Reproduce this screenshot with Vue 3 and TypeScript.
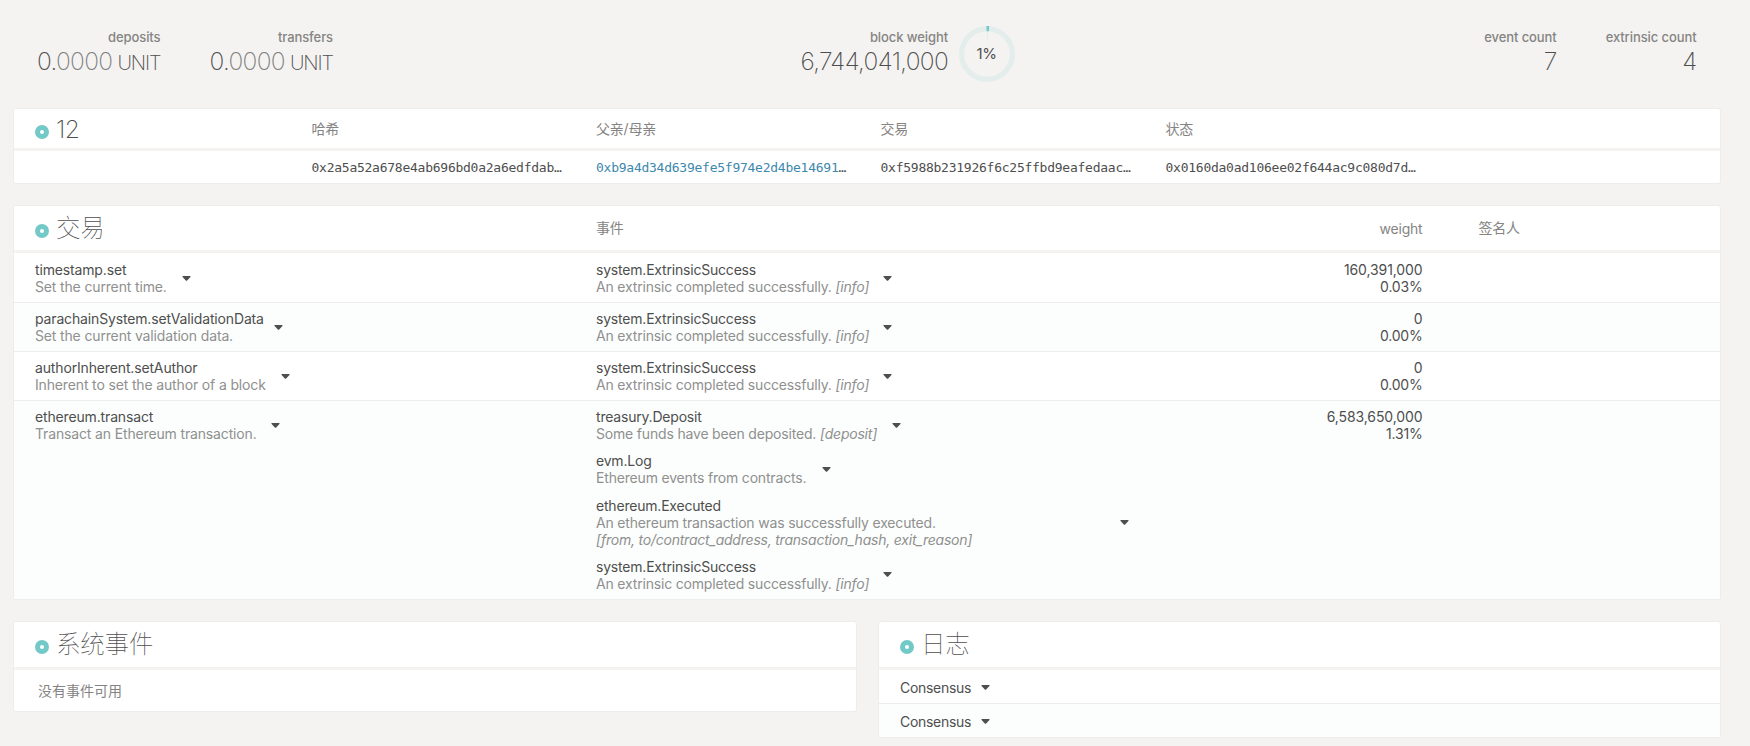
<script setup lang="ts">
interface Entry {
  name: string
  lines: { text: string; args?: string }[]
  width: number
}

interface Extrinsic {
  call: Entry
  events: Entry[]
  weight: string
  percent: string
}

const success: Entry = {
  name: 'system.ExtrinsicSuccess',
  lines: [{ text: 'An extrinsic completed successfully.', args: '[info]' }],
  width: 287,
}

const hashes = [
  { label: '哈希', value: '0x2a5a52a678e4ab696bd0a2a6edfdab' },
  { label: '父亲/母亲', value: '0xb9a4d34d639efe5f974e2d4be14691', link: true },
  { label: '交易', value: '0xf5988b231926f6c25ffbd9eafedaac' },
  { label: '状态', value: '0x0160da0ad106ee02f644ac9c080d7d' },
]

const extrinsics: Extrinsic[] = [
  {
    call: { name: 'timestamp.set', lines: [{ text: 'Set the current time.' }], width: 147 },
    events: [success],
    weight: '160,391,000',
    percent: '0.03%',
  },
  {
    call: { name: 'parachainSystem.setValidationData', lines: [{ text: 'Set the current validation data.' }], width: 239 },
    events: [success],
    weight: '0',
    percent: '0.00%',
  },
  {
    call: { name: 'authorInherent.setAuthor', lines: [{ text: 'Inherent to set the author of a block' }], width: 245.5 },
    events: [success],
    weight: '0',
    percent: '0.00%',
  },
  {
    call: { name: 'ethereum.transact', lines: [{ text: 'Transact an Ethereum transaction.' }], width: 236 },
    events: [
      { name: 'treasury.Deposit', lines: [{ text: 'Some funds have been deposited.', args: '[deposit]' }], width: 296 },
      { name: 'evm.Log', lines: [{ text: 'Ethereum events from contracts.' }], width: 226 },
      {
        name: 'ethereum.Executed',
        lines: [
          { text: 'An ethereum transaction was successfully executed.' },
          { text: '', args: '[from, to/contract_address, transaction_hash, exit_reason]' },
        ],
        width: 524,
      },
      success,
    ],
    weight: '6,583,650,000',
    percent: '1.31%',
  },
]

const logs = ['Consensus', 'Consensus']
</script>

<template>
  <main class="page">
    <header class="summary">
      <section class="group">
        <div v-for="label in ['deposits', 'transfers']" :key="label" class="stat balance">
          <span class="label">{{ label }}</span>
          <span class="value">0.<span class="decimals">0000</span><span class="unit">UNIT</span></span>
        </div>
      </section>
      <section class="group middle">
        <div class="stat">
          <span class="label">block weight</span>
          <span class="value">6,744,041,000</span>
        </div>
        <div class="gauge">
          <svg width="56" height="56" viewBox="0 0 56 56">
            <circle cx="28" cy="28" r="25.4" fill="none" stroke="#e3eeec" stroke-width="5.2" />
            <path d="M28 5.2L29.4 5.2L28.2 24Z" fill="#e3eeec" />
            <path d="M27.4 0H30.3L29.8 5.2H27.6Z" fill="#73c9c8" />
          </svg>
          <span>1%</span>
        </div>
      </section>
      <section class="group end">
        <div class="stat">
          <span class="label">event count</span>
          <span class="value">7</span>
        </div>
        <div class="stat">
          <span class="label">extrinsic count</span>
          <span class="value">4</span>
        </div>
      </section>
    </header>

    <section class="card block">
      <div class="head">
        <h1><i class="dot"></i>12</h1>
        <span v-for="h in hashes" :key="h.label">{{ h.label }}</span>
      </div>
      <div class="row">
        <span></span>
        <span v-for="h in hashes" :key="h.label" class="hash"><a v-if="h.link">{{ h.value }}</a><template v-else>{{ h.value }}</template>…</span>
      </div>
    </section>

    <section class="card extrinsics">
      <div class="head">
        <h1><i class="dot"></i>交易</h1>
        <span class="cjk">事件</span>
        <span class="num">weight</span>
        <span class="cjk signer">签名人</span>
      </div>
      <div v-for="ex in extrinsics" :key="ex.call.name" class="row">
        <div v-for="(column, c) in [[ex.call], ex.events]" :key="c" class="entries">
          <div v-for="entry in column" :key="entry.name" class="entry">
            <div class="text" :style="{ width: entry.width + 'px' }">
              <div class="name">{{ entry.name }}</div>
              <div v-for="(line, i) in entry.lines" :key="i" class="doc">{{ line.text }} <em v-if="line.args">{{ line.args }}</em></div>
            </div>
            <svg class="caret" width="9" height="5" viewBox="0 0 9 5"><path d="M.9 0H8.1Q9 .2 8.4 .9L5.2 4.5Q4.5 5.2 3.8 4.5L.6 .9Q0 .2 .9 0Z" /></svg>
          </div>
        </div>
        <div class="num">
          <div class="weight">{{ ex.weight }}</div>
          <div>{{ ex.percent }}</div>
        </div>
      </div>
    </section>

    <div class="columns">
      <section class="card">
        <div class="head">
          <h1><i class="dot"></i>系统事件</h1>
        </div>
        <div class="row empty">没有事件可用</div>
      </section>
      <section class="card">
        <div class="head">
          <h1><i class="dot"></i>日志</h1>
        </div>
        <div v-for="(log, i) in logs" :key="i" class="row log">
          <span>{{ log }}</span>
          <svg class="caret" width="9" height="5" viewBox="0 0 9 5"><path d="M.9 0H8.1Q9 .2 8.4 .9L5.2 4.5Q4.5 5.2 3.8 4.5L.6 .9Q0 .2 .9 0Z" /></svg>
        </div>
      </section>
    </div>
  </main>
</template>

<style>
html,
body {
  background: #f4f3f1;
}
</style>

<style scoped>
.page {
  box-sizing: border-box;
  width: 1750px;
  height: 746px;
  padding: 0 29px 0 13px;
  overflow: hidden;
  background: #f4f3f1;
  color: #4e4e4e;
  font: 14px/17px Inter, 'Noto Sans CJK SC', sans-serif;
  letter-spacing: -0.2px;
}

.summary {
  display: grid;
  grid-template-columns: 401px 1fr 400px;
  height: 108px;
}

.group {
  display: flex;
  align-items: flex-start;
  padding-top: 29px;
}

.stat {
  display: flex;
  flex-direction: column;
  align-items: flex-end;
}

.balance {
  width: 147.5px;
}

.balance + .balance {
  width: 172.5px;
}

.middle {
  padding-left: 387px;
}

.middle .stat {
  width: 147px;
}

.end {
  justify-content: flex-end;
  gap: 49px;
  padding-right: 24.5px;
}

.label {
  color: #858483;
  font-size: 13px;
  font-weight: 450;
  letter-spacing: -0.09px;
}

.value {
  height: 30px;
  font-size: 24.5px;
  font-weight: 200;
  line-height: 30px;
  letter-spacing: -0.7px;
  white-space: nowrap;
}

.decimals {
  opacity: 0.7;
}

.unit {
  margin-left: 5px;
  font-size: 20px;
  letter-spacing: -1.1px;
}

.gauge {
  display: grid;
  place-items: center;
  margin: -3.5px 0 0 10.5px;
}

.gauge > * {
  grid-area: 1 / 1;
}

.gauge span {
  font-size: 15px;
  letter-spacing: -0.4px;
}

.card {
  border: 1px solid #eeedeb;
  border-radius: 3px;
  background: #fff;
  margin-bottom: 21px;
}

.head {
  display: grid;
  align-items: center;
  box-sizing: border-box;
  height: 48px;
  padding-left: 21px;
  border-bottom: 3px solid #f4f3f2;
  color: #858483;
}

.head h1 {
  display: flex;
  align-items: center;
  margin: 0;
  color: #4e4e4e;
  font-size: 24.5px;
  font-weight: 100;
  line-height: 30px;
  letter-spacing: -0.2px;
}

.dot {
  box-sizing: border-box;
  width: 14px;
  height: 14px;
  margin: 5px 7px 0 0;
  border: 5px solid #73c9c8;
  border-radius: 50%;
}

.block .head,
.block .row {
  grid-template-columns: 276.5px 284.5px 284.5px 285px 1fr;
}

.block .head {
  height: 42px;
}

.block .head h1 {
  font-weight: 170;
  letter-spacing: -0.5px;
}

.block .dot {
  margin-top: 7px;
}

.block .row {
  display: grid;
  align-items: center;
  height: 32px;
  padding-left: 21px;
}

.hash {
  font: 13px/17px 'DejaVu Sans Mono', monospace;
  letter-spacing: -0.25px;
}

.hash a {
  color: #3e88ad;
}

.extrinsics .head,
.extrinsics .row {
  grid-template-columns: 561px 626.5px 200px 1fr;
}

.extrinsics .head {
  height: 47px;
}

.cjk {
  margin-top: -2px;
}

.num {
  text-align: right;
}

.weight {
  letter-spacing: -0.1px;
}

.signer {
  padding-left: 56px;
}

.extrinsics .row {
  display: grid;
  padding: 8px 0 7px 21px;
}

.extrinsics .row + .row,
.log + .log {
  border-top: 1px solid #eeedec;
}

.extrinsics .row + .row {
  padding-top: 7px;
}

.extrinsics .row:last-child {
  padding-bottom: 7.1px;
}

.row:nth-child(odd) {
  background: #fcfefd;
}

.entries {
  display: grid;
  align-content: start;
  gap: 10.3px;
}

.entries:first-child {
  letter-spacing: -0.15px;
}

.entry {
  display: flex;
  align-items: center;
}

.text {
  white-space: nowrap;
}

.doc {
  color: #8f908f;
}

.entries + .entries .doc {
  letter-spacing: -0.18px;
}

.doc em {
  letter-spacing: -0.22px;
}

.caret {
  flex: none;
  fill: #4e4e4e;
}

.columns {
  display: grid;
  grid-template-columns: 844px 843px;
  align-items: start;
  gap: 21px;
}

.empty {
  height: 41px;
  padding-left: 24px;
  color: #858483;
  line-height: 41px;
  letter-spacing: 0;
}

.log {
  display: flex;
  align-items: center;
  box-sizing: border-box;
  height: 33px;
  padding: 2px 0 0 21px;
}

.log + .log {
  height: 34px;
}

.log span {
  width: 81px;
  letter-spacing: -0.3px;
}
</style>
